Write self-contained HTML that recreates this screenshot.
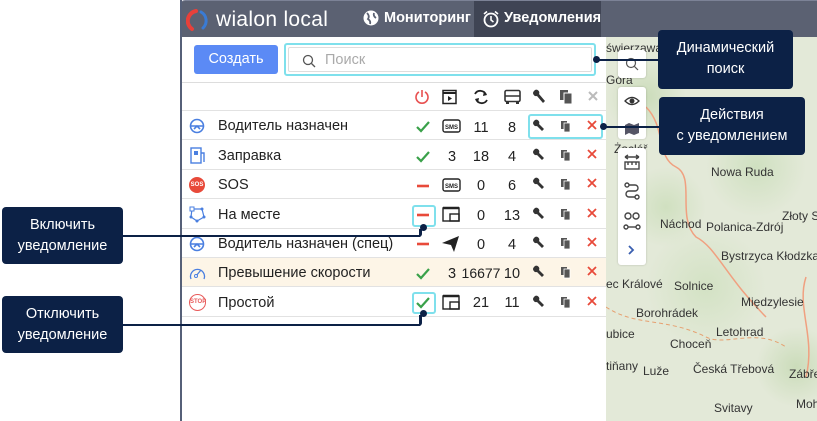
<!DOCTYPE html>
<html><head><meta charset="utf-8"><style>
*{margin:0;padding:0;box-sizing:border-box}
body{width:817px;height:421px;overflow:hidden;background:#fff;font-family:"Liberation Sans",sans-serif;position:relative}
.abs{position:absolute}
.map{left:606px;top:37px;width:211px;height:384px;background:#e3e9d8;overflow:hidden}
.map span{position:absolute;font-size:12px;color:#333;white-space:nowrap}
.top{left:180px;top:0;width:637px;height:37px;background:#5b6172;border-top:1px solid #7c8296;border-radius:5px 0 0 0}
.frame{left:180px;top:0;width:2px;height:421px;background:#566078}
.panel{left:182px;top:37px;width:424px;height:384px;background:#fff}
.row{position:absolute;left:182px;width:424px;height:29px;border-bottom:1px solid #e2e2e2;font-size:14.5px;color:#222}
.row .nm{position:absolute;left:36px;top:7px}
.ann{background:#0c2146;color:#fff;font-size:14.5px;text-align:center;border-radius:4px;line-height:21px;padding-top:8px}
.ln{background:#0c2146}
.dot{width:7px;height:7px;border-radius:50%;background:#0c2146}
.tb{left:618px;width:28px;background:#fff;border-radius:3px;box-shadow:0 0 2px rgba(0,0,0,.2)}
.hl{border:2px solid #7fe0ec;border-radius:3px}
</style></head><body>
<div class="abs map">
<div style="position:absolute;left:0;top:0;width:211px;height:384px;background:radial-gradient(circle at 40px 60px,#cbdcba 0,transparent 40px),radial-gradient(circle at 150px 130px,#cfe0c0 0,transparent 50px),radial-gradient(circle at 100px 250px,#d3e2c4 0,transparent 60px),radial-gradient(circle at 190px 330px,#cbdcba 0,transparent 40px),radial-gradient(circle at 60px 170px,#d0e0c0 0,transparent 40px)"></div>
<svg style="position:absolute;left:0;top:0" width="211" height="384"><path d="M40 70 C60 90 50 120 70 130 C90 140 70 180 90 200 C110 210 120 240 160 280" stroke="#f0a080" stroke-width="1.5" fill="none"/><path d="M0 270 C30 290 60 280 100 300 C120 310 150 290 180 310" stroke="#e6a070" stroke-width="1" stroke-dasharray="4 3" fill="none"/><path d="M200 240 C190 270 210 300 200 340" stroke="#f0a080" stroke-width="1.5" fill="none"/></svg>
<span style="left:0;top:4px">świerzawa</span>
<span style="left:0;top:36px">Góra</span>
<span style="left:8px;top:105px">Żacléř</span>
<span style="left:105px;top:128px">Nowa Ruda</span>
<span style="left:54px;top:180px">Náchod</span>
<span style="left:100px;top:183px">Polanica-Zdrój</span>
<span style="left:176px;top:172px">Złoty S</span>
<span style="left:115px;top:212px">Bystrzyca Kłodzka</span>
<span style="left:0;top:240px">ec Králové</span>
<span style="left:68px;top:242px">Solnice</span>
<span style="left:135px;top:258px">Międzylesie</span>
<span style="left:30px;top:269px">Borohrádek</span>
<span style="left:0;top:290px">ubice</span>
<span style="left:110px;top:288px">Letohrad</span>
<span style="left:64px;top:300px">Choceň</span>
<span style="left:0;top:322px">tiňany</span>
<span style="left:37px;top:327px">Luže</span>
<span style="left:87px;top:325px">Česká Třebová</span>
<span style="left:183px;top:330px">Zábře</span>
<span style="left:108px;top:364px">Svitavy</span>
<span style="left:190px;top:360px">Mohe</span>
</div>
<div class="abs top">
<svg style="position:absolute;left:6px;top:8px" width="24" height="24" viewBox="0 0 24 24"><path d="M10 2 A10 10 0 0 0 6 20" stroke="#e8403a" stroke-width="4" fill="none" stroke-linecap="round"/><path d="M15 3 A10 10 0 0 1 17 19" stroke="#3a7bd5" stroke-width="3" fill="none" stroke-linecap="round"/></svg>
<div style="position:absolute;left:36px;top:7px;color:#fff;font-size:21px;letter-spacing:0.3px">wialon local</div>
<svg style="position:absolute;left:183px;top:9px" width="16" height="16"><circle cx="8" cy="8" r="7.5" fill="#fff"/><path d="M4 3 Q7 6 5 9 Q8 11 7 14 M11 3 Q10 6 13 8" stroke="#5b6172" stroke-width="1.8" fill="none"/></svg>
<div style="position:absolute;left:204px;top:9px;color:#fff;font-size:14.5px;font-weight:bold">Мониторинг</div>
<div style="position:absolute;left:294px;top:0;width:127px;height:37px;background:#3f4454"></div>
<svg style="position:absolute;left:302px;top:9px" width="18" height="18"><circle cx="9" cy="10" r="6.5" stroke="#fff" stroke-width="1.8" fill="none"/><path d="M9 6 V10 L11.5 12 M2 4 L5 1.5 M16 4 L13 1.5" stroke="#fff" stroke-width="1.6" fill="none"/></svg>
<div style="position:absolute;left:324px;top:9px;color:#fff;font-size:14.5px;font-weight:bold">Уведомления</div>
</div>
<div class="abs frame"></div>
<div class="abs panel"></div>
<div class="abs" style="left:194px;top:45px;width:84px;height:29px;background:#5b8af5;border-radius:3px;color:#fff;font-size:14.5px;text-align:center;line-height:29px">Создать</div>
<div class="abs hl" style="left:284px;top:43px;width:312px;height:33px"><div style="position:absolute;left:2px;top:2px;right:2px;bottom:2px;border:1px solid #ddd;border-radius:2px"></div>
<svg style="position:absolute;left:16px;top:9px" width="14" height="14"><circle cx="6" cy="6" r="4.5" stroke="#555" stroke-width="1.3" fill="none"/><path d="M9.5 9.5 L13 13" stroke="#555" stroke-width="1.3"/></svg>
<div style="position:absolute;left:39px;top:7px;color:#aaa;font-size:14.5px">Поиск</div></div>
<div class="abs" style="left:182px;top:82px;width:424px;height:1px;background:#ddd"></div>
<div class="abs" style="left:182px;top:110px;width:424px;height:1px;background:#e2e2e2"></div>
<svg class="abs" style="left:414px;top:89px" width="190" height="16">
<path d="M5 3 A6 6 0 1 0 11 3" stroke="#e85050" stroke-width="1.6" fill="none"/><path d="M8 1 V8" stroke="#e85050" stroke-width="1.6"/>
<rect x="29" y="1.5" width="13" height="13" stroke="#222" stroke-width="1.5" fill="none"/><path d="M29 4 H42" stroke="#222" stroke-width="2"/><path d="M34 7 L38 9.5 L34 12Z" fill="#222"/>
<path d="M61 5 A6 6 0 0 1 72 6 M73 11 A6 6 0 0 1 62 10" stroke="#222" stroke-width="1.8" fill="none"/><path d="M70 2 L73 6 L69 7Z M64 14 L61 10 L65 9Z" fill="#222"/>
<rect x="91" y="1.5" width="15" height="11" rx="1.5" stroke="#333" stroke-width="1.6" fill="none"/><path d="M91 7 H106" stroke="#333" stroke-width="1.5"/><rect x="92" y="12" width="3" height="3" fill="#333"/><rect x="102" y="12" width="3" height="3" fill="#333"/>
<path d="M120 2 A3 3 0 0 0 123 7 L129 14 L131 12 L125 5 A3 3 0 0 0 121 1Z" fill="#333"/>
<rect x="146" y="1" width="8" height="10" fill="#555"/><rect x="150" y="4" width="8" height="11" fill="#555" stroke="#fff"/>
<path d="M175 3 L183 11 M183 3 L175 11" stroke="#bbb" stroke-width="2"/>
</svg>
<div class="row" style="top:111px"><svg class="abs" style="left:7px;top:7px" width="16" height="16"><circle cx="8" cy="8" r="6.5" stroke="#4a7fe0" stroke-width="1.6" fill="none"/><path d="M2 8 H14 M5 11 L8 8 L11 11" stroke="#4a7fe0" stroke-width="1.6" fill="none"/></svg><span class="nm">Водитель назначен</span></div>
<div class="row" style="top:141px"><svg class="abs" style="left:8px;top:6px" width="16" height="17"><rect x="1" y="1" width="10" height="15" stroke="#4a7fe0" stroke-width="1.4" fill="none"/><rect x="4" y="4" width="4" height="4" fill="#4a7fe0"/><path d="M11 6 H14 V15" stroke="#4a7fe0" stroke-width="1.4" fill="none"/></svg><span class="nm">Заправка</span></div>
<div class="row" style="top:170px"><div class="abs" style="left:7px;top:7px;width:16px;height:16px;border-radius:50%;background:#e84a3a;color:#fff;font-size:6px;font-weight:bold;text-align:center;line-height:16px">SOS</div><span class="nm">SOS</span></div>
<div class="row" style="top:200px"><svg class="abs" style="left:7px;top:6px" width="17" height="17"><path d="M3 3 L13 3 L15 11 L8 15 L2 11Z" stroke="#4a7fe0" stroke-width="1.2" fill="none"/><rect x="1" y="1" width="4" height="4" fill="#fff" stroke="#4a7fe0"/><circle cx="13" cy="3" r="1.5" fill="#4a7fe0"/><circle cx="15" cy="11" r="1.5" fill="#4a7fe0"/><circle cx="8" cy="15" r="1.5" fill="#4a7fe0"/><circle cx="2" cy="11" r="1.5" fill="#4a7fe0"/></svg><span class="nm">На месте</span></div>
<div class="row" style="top:229px"><svg class="abs" style="left:7px;top:7px" width="16" height="16"><circle cx="8" cy="8" r="6.5" stroke="#4a7fe0" stroke-width="1.6" fill="none"/><path d="M2 8 H14 M5 11 L8 8 L11 11" stroke="#4a7fe0" stroke-width="1.6" fill="none"/></svg><span class="nm">Водитель назначен (спец)</span></div>
<div class="row" style="top:258px;background:#fdf5e7"><svg class="abs" style="left:7px;top:7px" width="17" height="16"><path d="M2 14 A7 7 0 1 1 15 14" stroke="#4a7fe0" stroke-width="1.3" fill="none"/><path d="M7 11 L12 5" stroke="#4a7fe0" stroke-width="1.3"/><circle cx="7" cy="11" r="1.5" stroke="#4a7fe0" fill="#fff"/></svg><span class="nm">Превышение скорости</span></div>
<div class="row" style="top:288px"><div class="abs" style="left:7px;top:6px;width:17px;height:17px;border-radius:50%;border:1.3px solid #e85a5a;color:#e85a5a;font-size:6px;font-weight:bold;text-align:center;line-height:15px">STOP</div><span class="nm">Простой</span></div>
<svg class="abs" style="left:410px;top:111px" width="196" height="207" font-family="Liberation Sans" font-size="14.5" fill="#222" text-anchor="middle">
<path d="M7 16 L11 20 L19 11" stroke="#3aa14a" stroke-width="2.2" fill="none"/>
<path d="M7 46 L11 50 L19 41" stroke="#3aa14a" stroke-width="2.2" fill="none"/>
<path d="M7 75 H19" stroke="#e84a3a" stroke-width="2.6"/>
<path d="M7 104 H19" stroke="#e84a3a" stroke-width="2.6"/>
<path d="M7 133 H19" stroke="#e84a3a" stroke-width="2.6"/>
<path d="M7 163 L11 167 L19 158" stroke="#3aa14a" stroke-width="2.2" fill="none"/>
<path d="M7 192 L11 196 L19 187" stroke="#3aa14a" stroke-width="2.2" fill="none"/>
<g stroke="#222" stroke-width="1.4" fill="none"><rect x="33" y="9" width="17" height="12" rx="2"/><rect x="33" y="68" width="17" height="12" rx="2"/>
<rect x="33" y="97" width="16" height="13"/><rect x="40" y="103" width="9" height="7"/>
<rect x="33" y="185" width="16" height="13"/><rect x="40" y="191" width="9" height="7"/></g>
<path d="M33 97 H49 M33 185 H49" stroke="#222" stroke-width="2.5"/>
<text x="41.5" y="18" font-size="6" font-weight="bold">SMS</text><text x="41.5" y="77" font-size="6" font-weight="bold">SMS</text>
<path d="M32 132 L49 125 L44 141 L41 134Z" fill="#222"/>
<text x="42" y="50">3</text><text x="42" y="167">3</text>
<text x="71" y="21">11</text><text x="71" y="50">18</text><text x="71" y="79">0</text><text x="71" y="109">0</text><text x="71" y="138">0</text><text x="71" y="167" font-size="14">16677</text><text x="71" y="196">21</text>
<text x="102" y="21">8</text><text x="102" y="50">4</text><text x="102" y="79">6</text><text x="102" y="109">13</text><text x="102" y="138">4</text><text x="102" y="167">10</text><text x="102" y="196">11</text>
<g id="r"><path d="M124 10 A3 3 0 0 0 127 15 L132 20 L134 18 L129 13 A3 3 0 0 0 125 9Z" fill="#333"/><rect x="151" y="10" width="6" height="8" fill="#555"/><rect x="154" y="12" width="6" height="9" fill="#555" stroke="#fff" stroke-width=".8"/><path d="M178 10 L186 18 M186 10 L178 18" stroke="#e84a3a" stroke-width="1.8"/></g>
<use href="#r" y="29"/><use href="#r" y="58"/><use href="#r" y="88"/><use href="#r" y="117"/><use href="#r" y="146"/><use href="#r" y="176"/>
</svg>
<div class="abs hl" style="left:528px;top:114px;width:75px;height:25px"></div>
<div class="abs hl" style="left:412px;top:205px;width:24px;height:22px"></div>
<div class="abs hl" style="left:412px;top:292px;width:24px;height:22px"></div>
<div class="abs tb" style="top:50px;height:28px"><svg style="position:absolute;left:7px;top:7px" width="14" height="14"><circle cx="6" cy="6" r="4.5" stroke="#555" stroke-width="1.2" fill="none"/><path d="M9.5 9.5 L13 13" stroke="#555" stroke-width="1.2"/></svg></div>
<div class="abs tb" style="top:87px;height:52px"><svg style="position:absolute;left:6px;top:8px" width="16" height="40"><path d="M1 6 Q8 -1 15 6 Q8 13 1 6Z" stroke="#333" stroke-width="1.3" fill="none"/><circle cx="8" cy="6" r="2.5" fill="#333"/><path d="M1 30 L5 28 L10 30 L15 28 V38 L10 40 L5 38 L1 40Z" fill="#556"/></svg></div>
<div class="abs tb" style="top:148px;height:117px"><svg style="position:absolute;left:5px;top:6px" width="18" height="106" stroke="#444" stroke-width="1.4" fill="none"><path d="M2 3 H16 M2 3 L5 1 M2 3 L5 5 M16 3 L13 1 M16 3 L13 5"/><rect x="2" y="8" width="14" height="7"/><path d="M5 8 V11 M9 8 V11 M13 8 V11"/><circle cx="4" cy="31" r="2"/><circle cx="14" cy="43" r="2"/><path d="M6 31 H12 A3 3 0 0 1 12 37 H6 A3 3 0 0 0 6 43 H12"/><circle cx="5" cy="62" r="3"/><circle cx="13" cy="62" r="3"/><circle cx="3" cy="73" r="2"/><circle cx="15" cy="73" r="2"/><path d="M5 73 H13"/><path d="M6 92 L10 96 L6 100" stroke="#3a5fb0" stroke-width="1.8"/></svg></div>
<div class="abs ann" style="left:658px;top:30px;width:135px;height:59px">Динамический<br>поиск</div>
<div class="abs ann" style="left:659px;top:97px;width:146px;height:58px">Действия<br>с уведомлением</div>
<div class="abs ann" style="left:2px;top:207px;width:121px;height:57px">Включить<br>уведомление</div>
<div class="abs ann" style="left:2px;top:296px;width:121px;height:57px">Отключить<br>уведомление</div>
<div class="abs ln" style="left:597px;top:59px;width:61px;height:2px"></div><div class="abs dot" style="left:593px;top:56px"></div>
<div class="abs ln" style="left:604px;top:126px;width:55px;height:2px"></div><div class="abs dot" style="left:600px;top:123px"></div>
<div class="abs ln" style="left:123px;top:235px;width:297px;height:2px"></div><div class="abs ln" style="left:419px;top:229px;width:3px;height:8px;border-radius:0 0 3px 0"></div><div class="abs dot" style="left:420px;top:224px"></div>
<div class="abs ln" style="left:123px;top:324px;width:297px;height:2px"></div><div class="abs ln" style="left:419px;top:315px;width:3px;height:11px;border-radius:0 0 3px 0"></div><div class="abs dot" style="left:420px;top:310px"></div>
</body></html>
